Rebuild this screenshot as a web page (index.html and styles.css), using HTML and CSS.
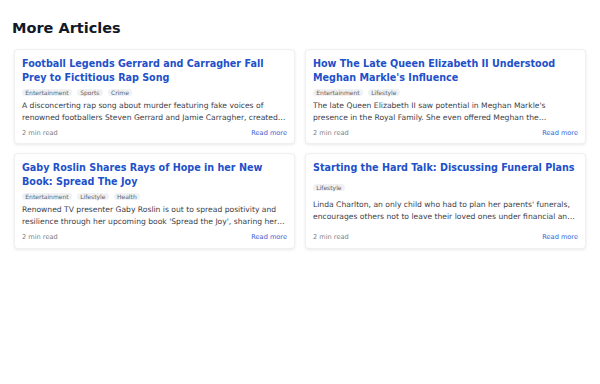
FILE: index.html
```html
<!DOCTYPE html>
<html lang="en">
<head>
    <meta charset="UTF-8">
    <meta name="viewport" content="width=device-width, initial-scale=1.0">
    <title>More Articles</title>
    <link rel="stylesheet" href="styles.css">
</head>
<body>
    <h1 class="section-title">More Articles</h1>

    <div class="article-grid">
        <div class="article-card">
            <a class="article-title" href="#">Football Legends Gerrard and Carragher Fall Prey to Fictitious Rap Song</a>
            <div class="tag-list">
                <span class="tag">Entertainment</span>
                <span class="tag">Sports</span>
                <span class="tag">Crime</span>
            </div>
            <p class="article-desc">A disconcerting rap song about murder featuring fake voices of renowned footballers Steven Gerrard and Jamie Carragher, created using artificial intelligence, has been circulating online.</p>
            <div class="article-footer">
                <span class="read-time">2 min read</span>
                <a class="read-more" href="#">Read more</a>
            </div>
        </div>

        <div class="article-card">
            <a class="article-title" href="#">How The Late Queen Elizabeth II Understood Meghan Markle's Influence</a>
            <div class="tag-list">
                <span class="tag">Entertainment</span>
                <span class="tag">Lifestyle</span>
            </div>
            <p class="article-desc">The late Queen Elizabeth II saw potential in Meghan Markle's presence in the Royal Family. She even offered Meghan the patronage of the National Theatre shortly after the wedding.</p>
            <div class="article-footer">
                <span class="read-time">2 min read</span>
                <a class="read-more" href="#">Read more</a>
            </div>
        </div>

        <div class="article-card">
            <a class="article-title" href="#">Gaby Roslin Shares Rays of Hope in her New Book: Spread The Joy</a>
            <div class="tag-list">
                <span class="tag">Entertainment</span>
                <span class="tag">Lifestyle</span>
                <span class="tag">Health</span>
            </div>
            <p class="article-desc">Renowned TV presenter Gaby Roslin is out to spread positivity and resilience through her upcoming book 'Spread the Joy', sharing her experiences of life after a cancer diagnosis.</p>
            <div class="article-footer">
                <span class="read-time">2 min read</span>
                <a class="read-more" href="#">Read more</a>
            </div>
        </div>

        <div class="article-card">
            <a class="article-title" href="#">Starting the Hard Talk: Discussing Funeral Plans</a>
            <div class="tag-list">
                <span class="tag">Lifestyle</span>
            </div>
            <p class="article-desc">Linda Charlton, an only child who had to plan her parents' funerals, encourages others not to leave their loved ones under financial and emotional strain.</p>
            <div class="article-footer">
                <span class="read-time">2 min read</span>
                <a class="read-more" href="#">Read more</a>
            </div>
        </div>
    </div>
</body>
</html>
```

FILE: styles.css
```css
body {
    margin: 0;
    padding: 18px 12px;
    font-family: "DejaVu Sans", "Noto Sans", sans-serif;
    background: #ffffff;
    color: #111827;
}
.section-title {
    font-size: 14.5px;
    line-height: 20px;
    font-weight: bold;
    margin: 0 0 11px;
    color: #111827;
}
.article-grid {
    display: grid;
    grid-template-columns: 1fr 1fr;
    gap: 9px 10px;
    padding: 0 2px;
}
.article-card {
    display: flex;
    flex-direction: column;
    justify-content: space-between;
    gap: 3.8px;
    padding: 7px 7px 5.5px;
    border: 1px solid #eef0f2;
    border-radius: 4px;
    box-shadow: 0 1px 3px rgba(0, 0, 0, 0.09);
    background: #ffffff;
}
.article-title {
    font-size: 9.6px;
    line-height: 14px;
    font-weight: bold;
    color: #2150c9;
    text-decoration: none;
}
.tag-list {
    display: flex;
    flex-wrap: wrap;
    gap: 5px;
}
.tag {
    font-size: 6px;
    line-height: 7px;
    padding: 0 3.3px;
    border-radius: 999px;
    background: #f0f1f3;
    color: #5b626b;
}
.article-desc {
    margin: 0;
    font-size: 7.62px;
    line-height: 12.2px;
    color: #3b4048;
    display: -webkit-box;
    -webkit-line-clamp: 2;
    -webkit-box-orient: vertical;
    overflow: hidden;
}
.article-footer {
    display: flex;
    justify-content: space-between;
    align-items: center;
    font-size: 6.6px;
    line-height: 10px;
}
.read-time {
    color: #7a8089;
}
.read-more {
    color: #3461d6;
    text-decoration: none;
}
```
